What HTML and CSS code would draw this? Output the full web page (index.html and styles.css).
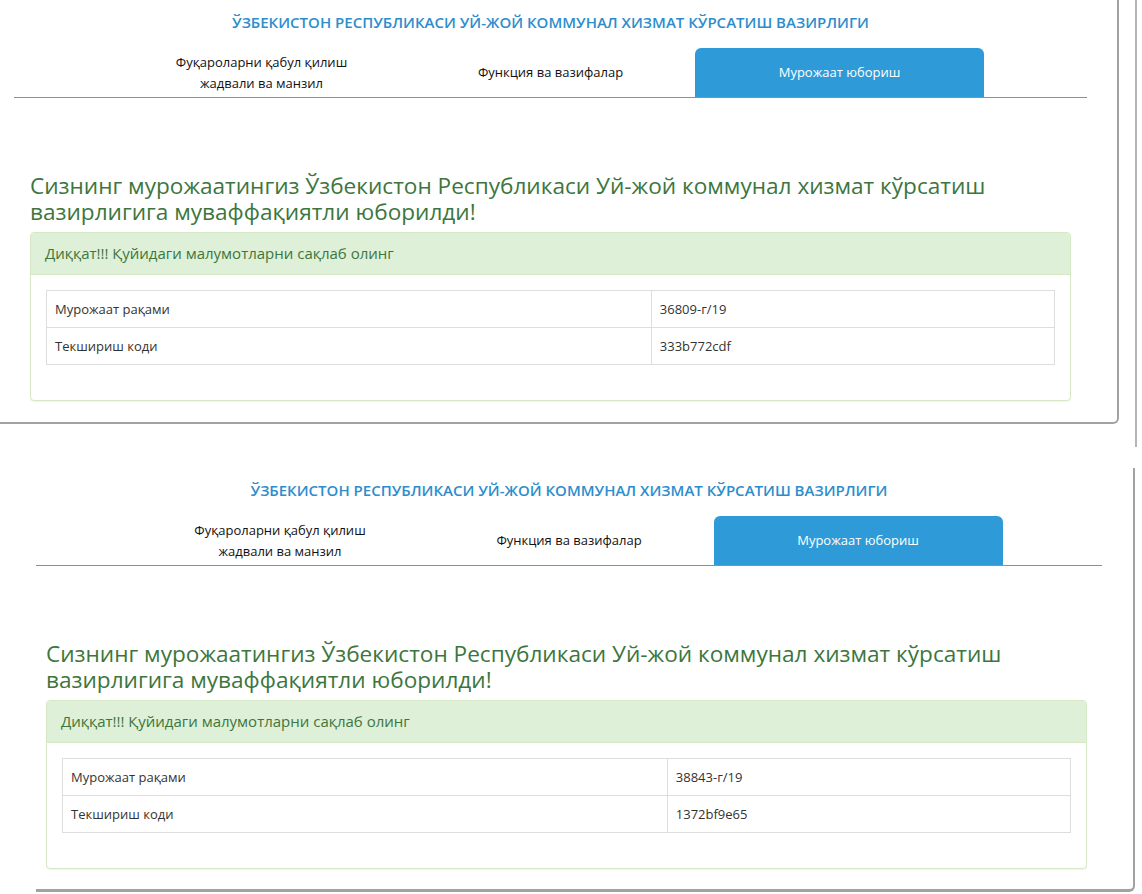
FILE: index.html
```html
<!DOCTYPE html>
<html lang="uz">
<head>
<meta charset="utf-8">
<title>Мурожаат юбориш</title>
<link rel="stylesheet" href="styles.css">
</head>
<body>
<div class="edge"></div>

<div class="shot shot-1">
  <div class="page">
    <h2 class="ministry">ЎЗБЕКИСТОН РЕСПУБЛИКАСИ УЙ-ЖОЙ КОММУНАЛ ХИЗМАТ КЎРСАТИШ ВАЗИРЛИГИ</h2>
    <nav class="tabs">
      <a class="tab">Фуқароларни қабул қилиш<br>жадвали ва манзил</a>
      <a class="tab">Функция ва вазифалар</a>
      <a class="tab active">Мурожаат юбориш</a>
    </nav>
    <div class="content">
      <h3 class="success-title">Сизнинг мурожаатингиз Ўзбекистон Республикаси Уй-жой коммунал хизмат кўрсатиш вазирлигига муваффақиятли юборилди!</h3>
      <div class="panel">
        <div class="panel-heading">Диққат!!! Қуйидаги малумотларни сақлаб олинг</div>
        <div class="panel-body">
          <table class="info">
            <tr><td class="label">Мурожаат рақами</td><td>36809-г/19</td></tr>
            <tr><td class="label">Текшириш коди</td><td>333b772cdf</td></tr>
          </table>
        </div>
      </div>
    </div>
  </div>
</div>

<div class="shot shot-2">
  <div class="page">
    <h2 class="ministry">ЎЗБЕКИСТОН РЕСПУБЛИКАСИ УЙ-ЖОЙ КОММУНАЛ ХИЗМАТ КЎРСАТИШ ВАЗИРЛИГИ</h2>
    <nav class="tabs">
      <a class="tab">Фуқароларни қабул қилиш<br>жадвали ва манзил</a>
      <a class="tab">Функция ва вазифалар</a>
      <a class="tab active">Мурожаат юбориш</a>
    </nav>
    <div class="content">
      <h3 class="success-title">Сизнинг мурожаатингиз Ўзбекистон Республикаси Уй-жой коммунал хизмат кўрсатиш вазирлигига муваффақиятли юборилди!</h3>
      <div class="panel">
        <div class="panel-heading">Диққат!!! Қуйидаги малумотларни сақлаб олинг</div>
        <div class="panel-body">
          <table class="info">
            <tr><td class="label">Мурожаат рақами</td><td>38843-г/19</td></tr>
            <tr><td class="label">Текшириш коди</td><td>1372bf9e65</td></tr>
          </table>
        </div>
      </div>
    </div>
  </div>
</div>
</body>
</html>
```

FILE: styles.css
```css
* { box-sizing: border-box; }

html, body {
  margin: 0;
  padding: 0;
  background: #ffffff;
}

body {
  position: relative;
  font-family: "Open Sans", "Noto Sans", sans-serif;
  color: #333333;
  width: 1142px;
  height: 894px;
  overflow: hidden;
}

.edge {
  position: absolute;
  left: 1135px;
  top: 0;
  width: 2px;
  height: 447px;
  background: #b4b4b4;
}

.shot {
  border-right: 2px solid #a2a2a2;
  border-bottom: 2px solid #a2a2a2;
  border-bottom-right-radius: 6px;
}

.shot-1 {
  width: 1119px;
  height: 424px;
  padding: 12px 30px 0 14px;
}

.shot-2 {
  margin: 44px 0 0 36px;
  width: 1099px;
  height: 424px;
  padding: 12px 31px 0 0;
  border-bottom-width: 3px;
}

.page {
  display: flex;
  flex-direction: column;
}

.ministry {
  margin: 0;
  font-size: 15px;
  line-height: 20px;
  font-weight: 600;
  color: #2d8dcc;
  text-align: center;
}

.tabs {
  margin-top: 16px;
  display: flex;
  justify-content: center;
  border-bottom: 1px solid #4ba3d6;
}

.tab {
  width: 289px;
  height: 49px;
  display: flex;
  align-items: center;
  justify-content: center;
  text-align: center;
  font-size: 13px;
  line-height: 21px;
  color: #111111;
}

.tab.active {
  background: #2e9bd8;
  color: #ffffff;
  border-radius: 6px 6px 0 0;
}

.content {
  width: 1041px;
  margin: 0 auto;
}

.shot-2 .content {
  margin-left: 10px;
}

.success-title {
  margin: 75px 0 6px;
  font-size: 22.6px;
  line-height: 26.4px;
  font-weight: 400;
  color: #3c763d;
}

.panel {
  border: 1px solid #d6e9c6;
  border-radius: 4px;
  background: #ffffff;
  box-shadow: 0 1px 1px rgba(0, 0, 0, 0.05);
}

.panel-heading {
  background: #dff0d8;
  color: #3c763d;
  border-bottom: 1px solid #d6e9c6;
  border-radius: 3px 3px 0 0;
  padding: 10px 14px;
  font-size: 15px;
  line-height: 21px;
}

.panel-body {
  padding: 15px;
}

.info {
  width: 100%;
  border-collapse: collapse;
  margin-bottom: 20px;
  font-size: 13px;
  color: #333333;
}

.info td {
  border: 1px solid #dddddd;
  padding: 8px 8px;
  line-height: 20px;
}

.info td.label {
  width: 60%;
}
```
